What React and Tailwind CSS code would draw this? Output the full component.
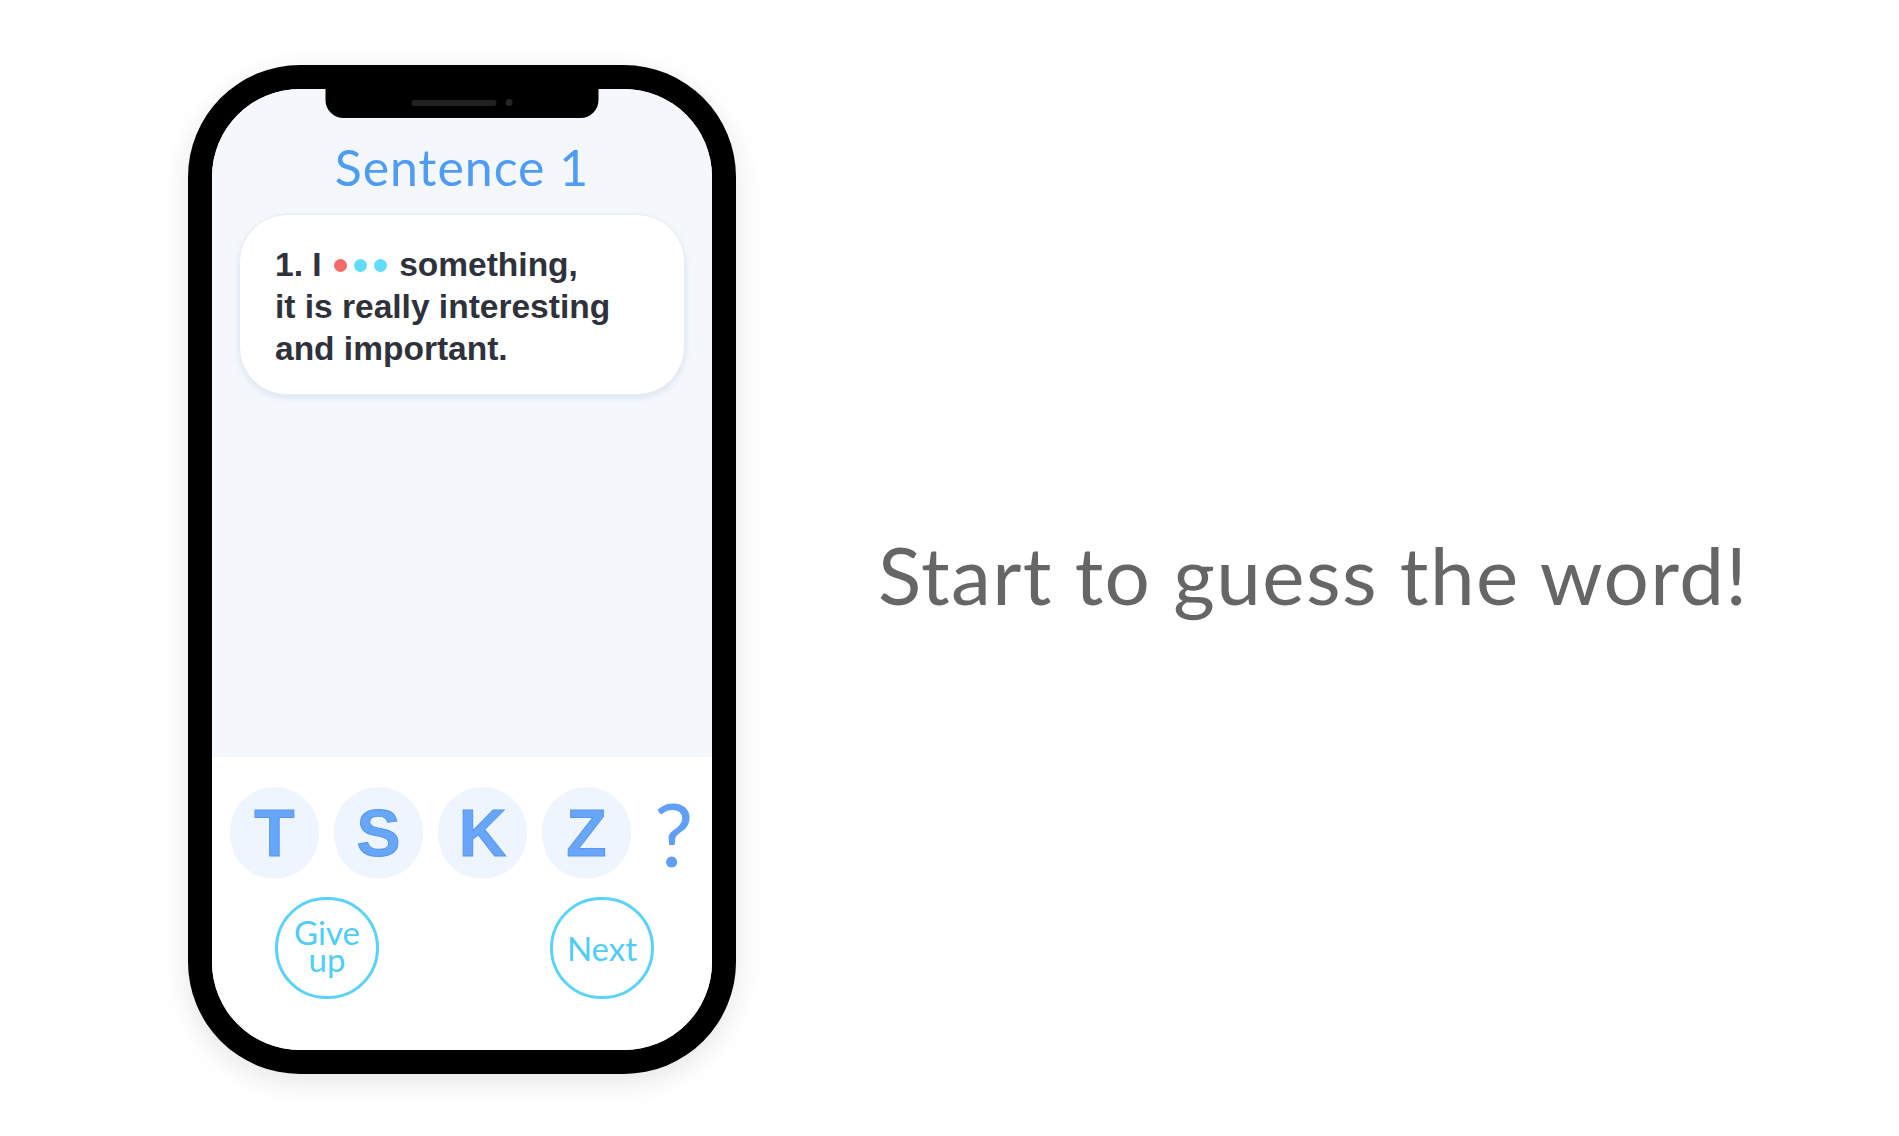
import React from "react";

const letters = ["T", "S", "K", "Z"];

function LetterBubble({ letter }) {
  return (
    <div className="w-[89px] h-[92px] rounded-full bg-[#eef5fe] flex items-center justify-center">
      <span className="font-['Liberation_Sans',Arial,sans-serif] font-bold text-[66px] leading-none text-[#67a6f8] [-webkit-text-stroke:1px_#5897ef]">
        {letter}
      </span>
    </div>
  );
}

function App() {
  return (
    <div className="w-[1899px] h-[1136px] bg-white flex">
      {/* Phone */}
      <div className="ml-[188px] mt-[65px] w-[548px] h-[1009px] rounded-[112px] bg-black p-[24px] shadow-[0_8px_28px_rgba(0,0,0,0.10)]">
        <div className="relative w-full h-full rounded-[88px] overflow-hidden bg-white flex flex-col">
          {/* Notch */}
          <div className="absolute top-0 left-1/2 -translate-x-1/2 w-[273px] h-[29px] bg-black rounded-b-[18px] flex items-center justify-center gap-[9px] pb-[2px]">
            <div className="w-[85px] h-[6px] rounded-full bg-[#222]" />
            <div className="w-[7px] h-[7px] rounded-full bg-[#262626]" />
          </div>

          {/* Sentence area */}
          <div className="h-[668px] bg-[#f4f8fd] flex flex-col">
            <h1 className="mt-[53px] text-center font-['Lato',sans-serif] font-normal text-[50px] leading-none tracking-[1px] text-[#4f9cf5]">
              Sentence 1
            </h1>
            <div className="mt-[22px] mx-[27px] h-[181px] rounded-[48px] bg-white border border-[#e7edf6] shadow-[0_3px_6px_rgba(120,140,170,0.18)] pl-[35px] pt-[29px]">
              <p className="font-['Liberation_Sans',Arial,sans-serif] font-bold text-[33.5px] leading-[42px] text-[#2f323c]">
                1. I{" "}
                <span className="inline-flex items-center gap-[7px] align-middle mx-[3px] -mt-[4px]">
                  <span className="w-[13px] h-[13px] rounded-full bg-[#f76a6a]" />
                  <span className="w-[13px] h-[13px] rounded-full bg-[#62dcfb]" />
                  <span className="w-[13px] h-[13px] rounded-full bg-[#62dcfb]" />
                </span>{" "}
                something,
                <br />
                it is really interesting
                <br />
                and important.
              </p>
            </div>
          </div>

          {/* Controls */}
          <div className="flex-1 bg-white flex flex-col">
            <div className="mt-[30px] ml-[18px] flex items-center gap-[15px]">
              {letters.map((l) => (
                <LetterBubble key={l} letter={l} />
              ))}
              <span className="ml-[8px] font-['Lato',sans-serif] text-[88px] leading-none text-[#5f9ff6]">
                ?
              </span>
            </div>
            <div className="mt-[18px] flex justify-between pl-[63px] pr-[58px]">
              <button className="w-[104px] h-[102px] rounded-full border-[3px] border-[#5ad2fa] flex flex-col items-center justify-center font-['Lato',sans-serif] text-[33px] text-[#4fcdf8] text-center pb-[2px]">
                <span className="block h-[29px] leading-[29px]">Give</span>
                <span className="block h-[29px] leading-[25px]">up</span>
              </button>
              <button className="w-[104px] h-[102px] rounded-full border-[3px] border-[#5ad2fa] flex items-center justify-center font-['Lato',sans-serif] text-[33px] leading-none text-[#4fcdf8]">
                Next
              </button>
            </div>
          </div>
        </div>
      </div>

      {/* Caption */}
      <div className="ml-[142px] flex items-center pt-[12px]">
        <h2 className="font-['Lato',sans-serif] font-normal text-[80px] leading-none tracking-[1.4px] text-[#666666] whitespace-nowrap">
          Start to guess the word!
        </h2>
      </div>
    </div>
  );
}

export default App;
